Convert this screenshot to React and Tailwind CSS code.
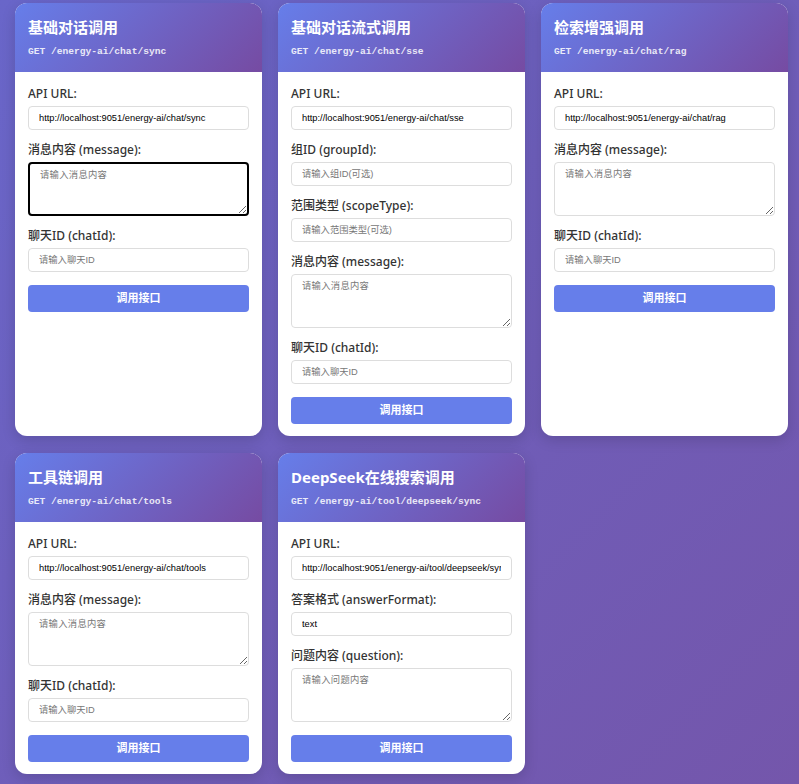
import React from "react";

const apis = [
  {
    title: "基础对话调用",
    path: "GET /energy-ai/chat/sync",
    fields: [
      { label: "API URL:", value: "http://localhost:9051/energy-ai/chat/sync" },
      { label: "消息内容 (message):", placeholder: "请输入消息内容", area: true, focused: true },
      { label: "聊天ID (chatId):", placeholder: "请输入聊天ID" },
    ],
  },
  {
    title: "基础对话流式调用",
    path: "GET /energy-ai/chat/sse",
    fields: [
      { label: "API URL:", value: "http://localhost:9051/energy-ai/chat/sse" },
      { label: "组ID (groupId):", placeholder: "请输入组ID(可选)" },
      { label: "范围类型 (scopeType):", placeholder: "请输入范围类型(可选)" },
      { label: "消息内容 (message):", placeholder: "请输入消息内容", area: true },
      { label: "聊天ID (chatId):", placeholder: "请输入聊天ID" },
    ],
  },
  {
    title: "检索增强调用",
    path: "GET /energy-ai/chat/rag",
    fields: [
      { label: "API URL:", value: "http://localhost:9051/energy-ai/chat/rag" },
      { label: "消息内容 (message):", placeholder: "请输入消息内容", area: true },
      { label: "聊天ID (chatId):", placeholder: "请输入聊天ID" },
    ],
  },
  {
    title: "工具链调用",
    path: "GET /energy-ai/chat/tools",
    fields: [
      { label: "API URL:", value: "http://localhost:9051/energy-ai/chat/tools" },
      { label: "消息内容 (message):", placeholder: "请输入消息内容", area: true },
      { label: "聊天ID (chatId):", placeholder: "请输入聊天ID" },
    ],
  },
  {
    title: "DeepSeek在线搜索调用",
    path: "GET /energy-ai/tool/deepseek/sync",
    fields: [
      { label: "API URL:", value: "http://localhost:9051/energy-ai/tool/deepseek/sync" },
      { label: "答案格式 (answerFormat):", value: "text" },
      { label: "问题内容 (question):", placeholder: "请输入问题内容", area: true },
    ],
  },
];

const Field = ({ f }) => (
  <div className="mb-3">
    <label className="block mb-[5px] text-[12px] leading-[15px] text-[#333] font-medium">{f.label}</label>
    {f.area ? (
      <textarea
        rows={3}
        placeholder={f.placeholder}
        className={
          "block w-full h-[54px] rounded-[4px] px-[10px] py-[6px] text-[9.3px] leading-[12px] tracking-[0.3px] font-['Liberation_Mono','Noto_Sans_CJK_SC',monospace] placeholder:text-[#777] outline-none " +
          (f.focused ? "border-2 border-black" : "border border-[#ddd]")
        }
      />
    ) : (
      <input
        type="text"
        defaultValue={f.value}
        placeholder={f.placeholder}
        className="block w-full h-[24px] rounded-[4px] border border-[#ddd] px-[10px] text-[9.3px] text-black font-['Liberation_Sans','Noto_Sans_CJK_SC',sans-serif] placeholder:text-[#777] outline-none"
      />
    )}
  </div>
);

const Card = ({ api }) => (
  <div className="bg-white rounded-xl overflow-hidden shadow-[0_4px_14px_rgba(0,0,0,0.15)] flex flex-col">
    <div className="bg-[linear-gradient(135deg,#667eea,#764ba2)] px-[13px] pt-[14px] pb-[14px] text-white">
      <h3 className="text-[15px] leading-5 font-bold">{api.title}</h3>
      <div className="mt-[8px] text-[9.6px] leading-[13px] font-bold opacity-85 font-['Liberation_Mono',monospace]">
        {api.path}
      </div>
    </div>
    <div className="px-[13px] pt-[14px] pb-[12px]">
      {api.fields.map((f, i) => (
        <Field key={i} f={f} />
      ))}
      <button className="w-full h-[27px] -mt-px rounded-[4px] bg-[#667eea] text-white text-[11px] font-bold">
        调用接口
      </button>
    </div>
  </div>
);

export default function App() {
  return (
    <div className="min-h-screen bg-[linear-gradient(135deg,#6966c9,#7456ab)] font-['Noto_Sans','Noto_Sans_CJK_SC',sans-serif] pt-[3px] pb-[9px] px-[15px]">
      <div className="grid grid-cols-[repeat(3,247px)] gap-x-4 gap-y-[17px]">
        {apis.map((api, i) => (
          <Card key={i} api={api} />
        ))}
      </div>
    </div>
  );
}
